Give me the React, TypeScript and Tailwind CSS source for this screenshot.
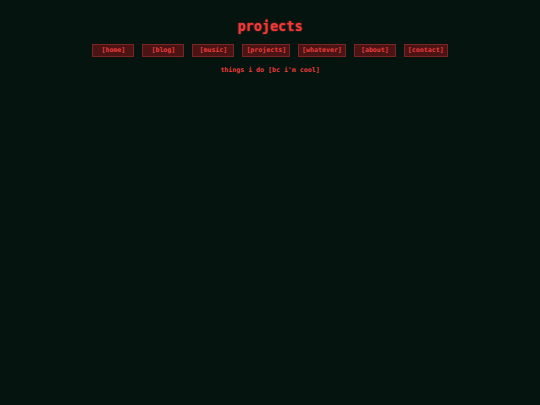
import React from "react";

const links = ["home", "blog", "music", "projects", "whatever", "about", "contact"];

export default function App() {
  return (
    <div
      className="w-[540px] h-[405px] bg-[#061410] flex flex-col items-center"
      style={{ fontFamily: '"DejaVu Sans Mono", monospace' }}
    >
      <h1 className="mt-[17px] text-[13.5px] leading-[18px] font-bold text-[#f03a3a] [text-shadow:0_0_2px_rgba(255,60,60,0.6)]">
        projects
      </h1>
      <nav className="mt-[9px] flex gap-[8px]">
        {links.map((l) => (
          <a
            key={l}
            className="min-w-[42px] h-[13px] px-[3px] flex items-center justify-center bg-[#4a1414] border border-[#7a2424] text-[6.6px] leading-none font-bold text-[#ea3c3c]"
          >
            [{l}]
          </a>
        ))}
      </nav>
      <p className="mt-[9px] text-[6.6px] leading-[9px] font-bold text-[#ea3c3c]">things i do [bc i'm cool]</p>
    </div>
  );
}
